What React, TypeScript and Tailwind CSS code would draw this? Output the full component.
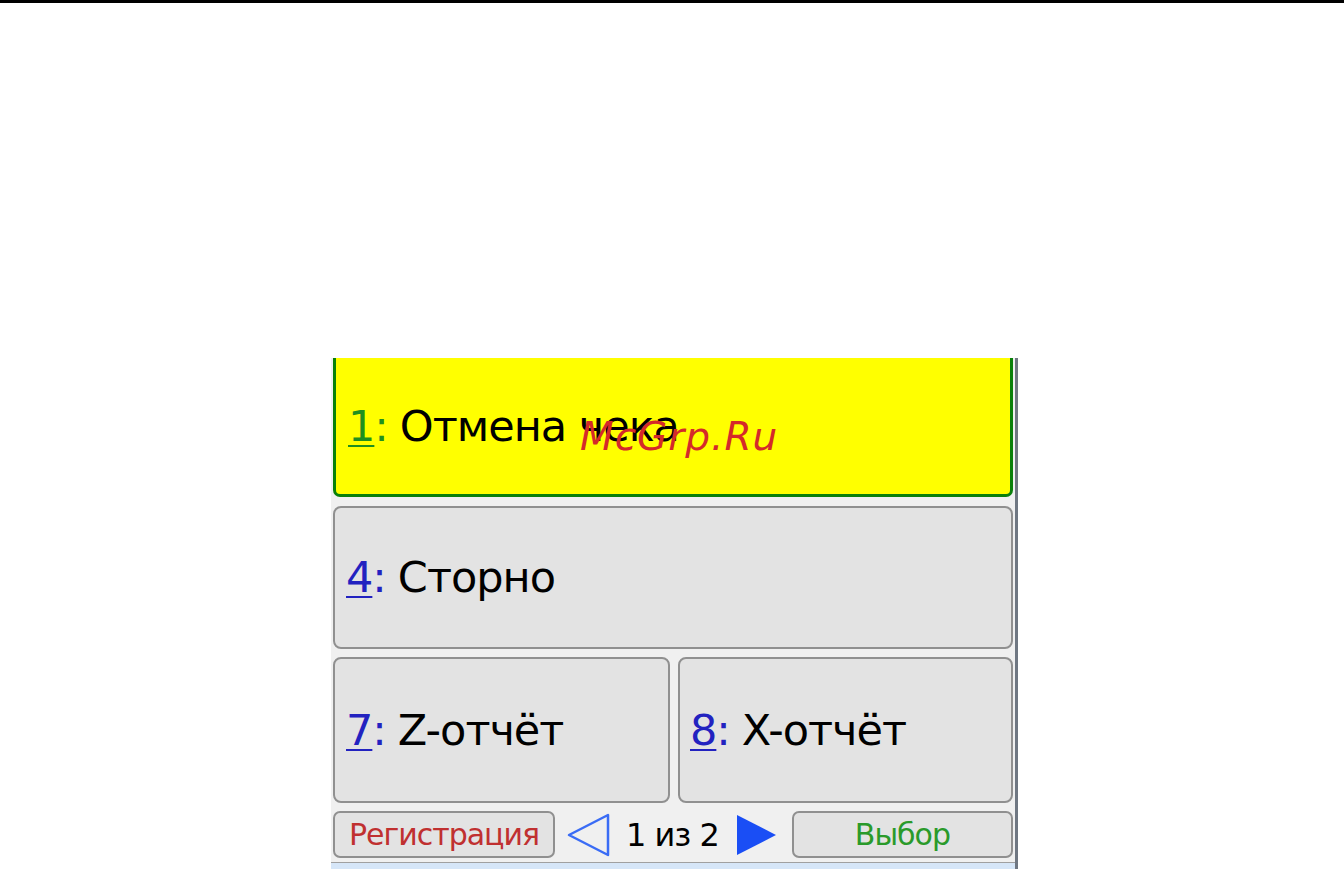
import React from 'react';

const font = { fontFamily: '"DejaVu Sans", Tahoma, sans-serif' };

function Key({ n, color }: { n: string; color: string }) {
  return (
    <>
      <span className={`underline underline-offset-4 decoration-2 ${color}`}>{n}</span>
      <span className={color}>:</span>
    </>
  );
}

export default function App() {
  return (
    <div className="w-[1344px] h-[869px] bg-white flex flex-col overflow-hidden" style={font}>
      <div className="h-[3px] bg-black shrink-0" />
      <div className="h-[355px] shrink-0" />
      <div className="ml-[331px] w-[687px] flex-1 flex flex-col bg-[#f0f0f0] border-r-[3px] border-[#6f7782] relative">
        <div className="flex-1 flex flex-col px-[2px]">
          <div className="h-[139px] bg-[#ffff00] border-[3px] border-t-0 border-[#0a800a] rounded-b-[7px] flex items-center pl-[12px] text-[43px] text-black tracking-[-1px]">
            <Key n="1" color="text-[#1f8f1f]" />
            <span className="ml-[12px]">Отмена чека</span>
          </div>
          <div className="h-[143px] mt-[9px] bg-[#e3e3e3] border-2 border-[#909090] rounded-[8px] flex items-center pl-[11px] text-[43px] text-black tracking-[-1px]">
            <Key n="4" color="text-[#2222c0]" />
            <span className="ml-[12px]">Сторно</span>
          </div>
          <div className="h-[146px] mt-[8px] flex gap-[8px]">
            <div className="w-[337px] bg-[#e3e3e3] border-2 border-[#909090] rounded-[8px] flex items-center pl-[11px] text-[43px] text-black tracking-[-1px]">
              <Key n="7" color="text-[#2222c0]" />
              <span className="ml-[12px]">Z-отчёт</span>
            </div>
            <div className="flex-1 bg-[#e3e3e3] border-2 border-[#909090] rounded-[8px] flex items-center pl-[10px] text-[43px] text-black tracking-[-1px]">
              <Key n="8" color="text-[#2222c0]" />
              <span className="ml-[12px]">X-отчёт</span>
            </div>
          </div>
          <div className="h-[47px] mt-[8px] flex items-center">
            <div className="w-[222px] h-[47px] bg-[#e3e3e3] border-2 border-[#909090] rounded-[7px] flex items-center justify-center text-[30px] text-[#c03030] tracking-[-1px]">
              Регистрация
            </div>
            <svg width="44" height="46" viewBox="0 0 44 46" className="ml-[11px]">
              <polygon points="42,3 42,43 3,23" fill="none" stroke="#3a6cf5" strokeWidth="2.5" strokeLinejoin="round" />
            </svg>
            <div className="ml-[16px] text-[32px] text-black tracking-[-1px]">1 из 2</div>
            <svg width="42" height="46" viewBox="0 0 42 46" className="ml-[17px]">
              <polygon points="1,3 1,43 40,23" fill="#1a4ef5" />
            </svg>
            <div className="ml-[14px] flex-1 h-[47px] bg-[#e3e3e3] border-2 border-[#909090] rounded-[7px] flex items-center justify-center text-[30px] text-[#2a9a2a] tracking-[-1px]">
              Выбор
            </div>
          </div>
          <div className="h-[4px]" />
        </div>
        <div className="h-[1px] bg-[#a0a0a0]" />
        <div className="h-[6px] bg-[#d6e6f8]" />
        <div className="absolute left-[249px] top-[50px] text-[39px] italic text-[#d42a2a] tracking-[1px] pointer-events-none">
          McGrp.Ru
        </div>
      </div>
    </div>
  );
}
